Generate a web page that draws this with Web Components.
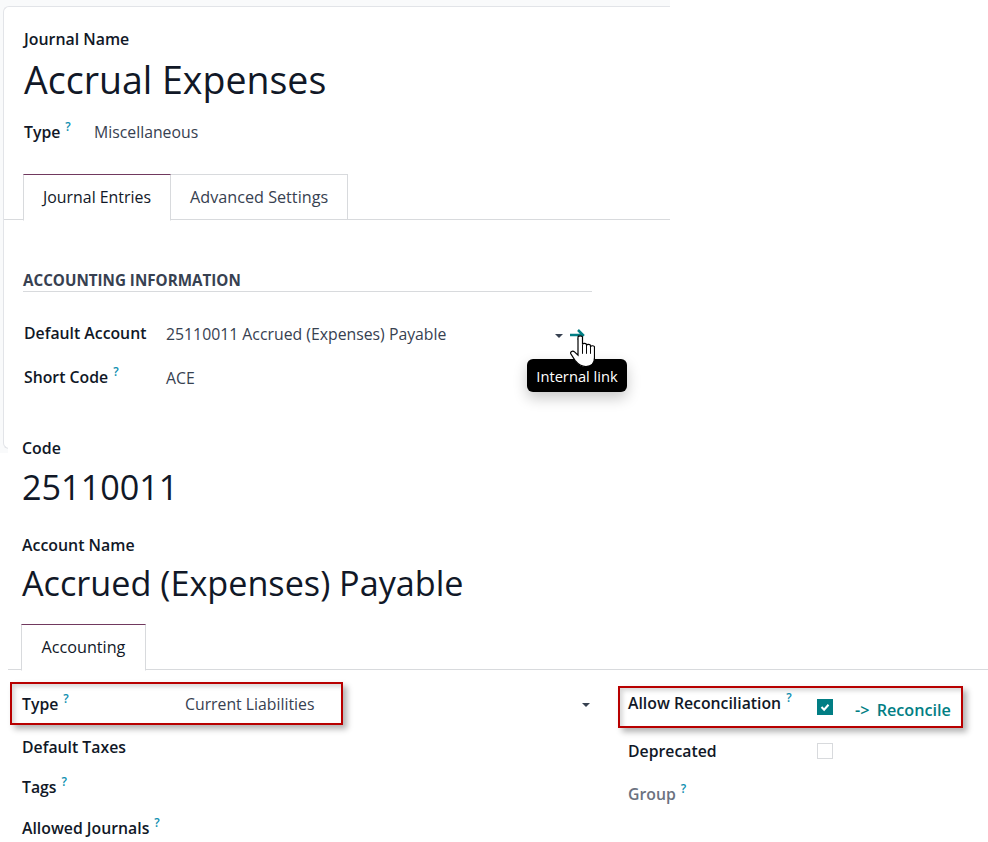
<!DOCTYPE html>
<html>
<head>
<meta charset="utf-8">
<title>Accrual Expenses</title>
<style>
    body {
        margin: 0;
        background: #fff;
        color: #111827;
        font-family: "Open Sans", "Noto Sans", sans-serif;
        font-size: 15.8px;
    }
</style>
</head>
<body>

<journal-card>
    <big-name label="Journal Name" title-text="Accrual Expenses"></big-name>
    <form-field id="journalType" label="Type" help value="Miscellaneous" width="70"></form-field>
    <tab-bar first="Journal Entries" second="Advanced Settings"></tab-bar>
    <section-title>ACCOUNTING INFORMATION</section-title>
    <account-row></account-row>
    <form-field id="shortCode" label="Short Code" help value="ACE" width="142"></form-field>
</journal-card>

<account-form></account-form>

<script>
class BigName extends HTMLElement {
    constructor() {
        super();
        this.attachShadow({ mode: 'open' });
        this.shadowRoot.innerHTML = `
            <style>
                :host { display: block; }
                .label { font-weight: 600; font-size: 15.9px; line-height: 20px; }
                .name { font-size: var(--name-size, 34.2px); line-height: 50px; margin-top: var(--name-gap, 4px); white-space: nowrap; }
            </style>
            <div class="label"></div>
            <div class="name"></div>
        `;
    }

    connectedCallback() {
        this.shadowRoot.querySelector('.label').textContent = this.getAttribute('label');
        this.shadowRoot.querySelector('.name').textContent = this.getAttribute('title-text');
    }
}

class FormField extends HTMLElement {
    constructor() {
        super();
        this.attachShadow({ mode: 'open' });
        this.shadowRoot.innerHTML = `
            <style>
                :host { display: flex; align-items: baseline; line-height: 20px; font-size: 15.8px; }
                .label { font-weight: 600; flex: none; white-space: nowrap; transform: translateY(var(--label-lift, 0)); }
                .label.muted { color: #6b7280; }
                .help { color: #0d8fb0; font-size: 12px; font-weight: 600; margin-left: 5px; position: relative; top: -7px; }
                .value { color: #374151; white-space: nowrap; }
            </style>
            <div class="label"></div>
            <div class="value"></div>
        `;
    }

    connectedCallback() {
        const label = this.shadowRoot.querySelector('.label');
        label.textContent = this.getAttribute('label');
        if (this.hasAttribute('help')) label.insertAdjacentHTML('beforeend', '<span class="help">?</span>');
        if (this.hasAttribute('muted')) label.classList.add('muted');
        if (this.hasAttribute('width')) label.style.width = this.getAttribute('width') + 'px';
        this.shadowRoot.querySelector('.value').textContent = this.getAttribute('value') || '';
    }
}

class TabBar extends HTMLElement {
    constructor() {
        super();
        this.attachShadow({ mode: 'open' });
        this.shadowRoot.innerHTML = `
            <style>
                :host { display: flex; height: 45px; border-bottom: 1px solid #d8dadd; }
                .tab { padding: 0 var(--tab-pad, 19px); line-height: 44px; height: 45px; border: 1px solid #d8dadd; border-bottom: 0; color: #374151; font-size: 16.2px; }
                .tab + .tab { margin-left: -1px; }
                .active { border-top-color: #71395f; background: #fff; color: #111827; border-bottom: 1px solid #fff; z-index: 1; font-size: var(--first-size, 16.2px); }
            </style>
            <div class="tab active"></div>
            <div class="tab second"></div>
        `;
    }

    connectedCallback() {
        this.shadowRoot.querySelector('.active').textContent = this.getAttribute('first');
        const second = this.shadowRoot.querySelector('.second');
        if (this.hasAttribute('second')) second.textContent = this.getAttribute('second');
        else second.remove();
    }
}

class SectionTitle extends HTMLElement {
    constructor() {
        super();
        this.attachShadow({ mode: 'open' });
        this.shadowRoot.innerHTML = `
            <style>
                :host { display: block; width: 569px; padding-bottom: 1px; border-bottom: 1px solid #d8dadd;
                        font-weight: 700; font-size: 15.2px; line-height: 20px; color: #374151; white-space: nowrap; }
            </style>
            <slot></slot>
        `;
    }
}

class AccountRow extends HTMLElement {
    constructor() {
        super();
        this.attachShadow({ mode: 'open' });
        this.shadowRoot.innerHTML = `
            <style>
                :host { display: flex; align-items: center; position: relative; width: 568px; height: 20px; }
                form-field { flex: 1; }
                .caret { width: 0; height: 0; border: 4px solid transparent; border-top: 4px solid #374151; border-bottom: 0; margin: 4px 7px 0 0; }
                .arrow { display: block; flex: none; margin: 2px 7px 0 0; }
                .tooltip { position: absolute; left: 503px; top: 35px; width: 100px; height: 33px; border-radius: 6px; background: #000;
                           color: #fff; font-size: 14.7px; line-height: 35px; text-align: center; box-shadow: 0 6px 14px rgba(0,0,0,.22); }
                .hand { position: absolute; left: 546px; top: 11px; display: block; }
            </style>
            <form-field label="Default Account" value="25110011 Accrued (Expenses) Payable" width="142"></form-field>
            <span class="caret"></span>
            <svg class="arrow" width="15" height="12" viewBox="0 0 15 12"><path d="M0 6h13M8 1l5 5-5 5" fill="none" stroke="#017e84" stroke-width="2.500"/></svg>
            <span class="tooltip">Internal link</span>
            <svg class="hand" width="25" height="32" viewBox="0 0 25 34" preserveAspectRatio="none">
                <path d="M8 2C8 .5 12.500 .5 12.500 2V10C13 8.500 16.500 8.500 16.500 10.500V11C17 9.500 20.500 9.500 20.500 11.500V12.500C21 11 24.500 11 24.500 13V24C24.500 29 22 33.500 16 33.500C11 33.500 8 31 5 27L.8 20C0 18 2.500 16 4.500 18L8 21.500Z" fill="#fff" stroke="#000" stroke-width="1.200"/>
                <path d="M12.500 10V20M16.500 10.500V20M20.500 11.500V20" fill="none" stroke="#000" stroke-width="1"/>
            </svg>
        `;
    }
}

class JournalCard extends HTMLElement {
    constructor() {
        super();
        this.attachShadow({ mode: 'open' });
        this.shadowRoot.innerHTML = `
            <style>
                :host { display: block; width: 670px; height: 453px; box-sizing: border-box; padding: 6px 0 4px 3px; background: #f9fafb; --first-size: 15.9px; --label-lift: 0px; }
                .card { height: 100%; box-sizing: border-box; padding-top: 22px; background: #fff; border: 1px solid #e2e4e8; border-right: 0; border-radius: 6px 0 0 6px; }
                ::slotted(big-name) { margin-left: 20px; --name-size: 37.5px; --name-gap: 6px; }
                ::slotted(#journalType) { margin: 17px 0 0 20px; }
                ::slotted(tab-bar) { margin-top: 30px; padding-left: 19px; }
                ::slotted(section-title) { margin: 50px 0 0 19px; }
                ::slotted(account-row) { margin: 32px 0 0 20px; --label-lift: -1px; }
                ::slotted(#shortCode) { margin: 24px 0 0 20px; --label-lift: -1px; }
            </style>
            <div class="card"><slot></slot></div>
        `;
    }
}

// Red marker drawn on top of the screenshot
class MarkBox extends HTMLElement {
    constructor() {
        super();
        this.attachShadow({ mode: 'open' });
        this.shadowRoot.innerHTML = `
            <style>
                :host { display: block; position: absolute; box-sizing: border-box; border: 2px solid #b80000;
                        box-shadow: 4px 4px 6px rgba(0,0,0,.3), inset 3px 3px 4px rgba(0,0,0,.15); pointer-events: none; }
            </style>
        `;
    }
}

class AccountForm extends HTMLElement {
    constructor() {
        super();
        this.attachShadow({ mode: 'open' });
        this.shadowRoot.innerHTML = `
            <style>
                :host { display: block; position: relative; height: 412px; margin: -23px 0 0 8px; padding-top: 8px; box-sizing: border-box; background: #fff; }
                big-name { margin-left: 14px; }
                .second { margin-top: 23px; --name-gap: 3px; }
                tab-bar { margin-top: 16px; padding-left: 13px; --tab-pad: 19.5px; }
                .cols { display: grid; grid-template-columns: 606px 1fr; padding: 24px 0 0 14px; }
                .left { display: flex; flex-direction: column; gap: 20px; }
                .right { display: flex; flex-direction: column; }
                .type { display: flex; align-items: center; width: 568px; margin-bottom: 1px; }
                .type form-field { flex: 1; }
                .last { margin-top: -1px; }
                .caret { width: 0; height: 0; border: 4px solid transparent; border-top: 4px solid #374151; border-bottom: 0; }
                .check-row { display: flex; align-items: center; height: 20px; margin-bottom: 27px; }
                .check-row + .check-row { margin-bottom: 23px; }
                .check-row form-field { width: 189px; }
                .box { width: 16px; height: 16px; box-sizing: border-box; border: 1px solid #d8dadd; flex: none; display: block; }
                .box.on { background: #017e84; border-color: #017e84; margin-top: 5px; }
                .reconcile { color: #017e84; font-weight: 600; margin: 12px 0 0 22px; font-size: 16.2px; word-spacing: 3px; white-space: nowrap; }
                mark-box.a { left: 2px; top: 252px; width: 333px; height: 43px; }
                mark-box.b { left: 610px; top: 256px; width: 345px; height: 42px; }
            </style>
            <big-name label="Code" title-text="25110011"></big-name>
            <big-name class="second" label="Account Name" title-text="Accrued (Expenses) Payable"></big-name>
            <tab-bar first="Accounting"></tab-bar>
            <div class="cols">
                <div class="left">
                    <div class="type">
                        <form-field label="Type" help value="Current Liabilities" width="163"></form-field>
                        <span class="caret"></span>
                    </div>
                    <form-field label="Default Taxes"></form-field>
                    <form-field label="Tags" help></form-field>
                    <form-field class="last" label="Allowed Journals" help></form-field>
                </div>
                <div class="right">
                    <div class="check-row">
                        <form-field label="Allow Reconciliation" help></form-field>
                        <svg class="box on" viewBox="0 0 16 16"><path d="M4 8l3 3 5-5.500" fill="none" stroke="#fff" stroke-width="2.400"/></svg>
                        <span class="reconcile">-&gt; Reconcile</span>
                    </div>
                    <div class="check-row">
                        <form-field label="Deprecated"></form-field>
                        <span class="box"></span>
                    </div>
                    <form-field label="Group" help muted></form-field>
                </div>
            </div>
            <mark-box class="a"></mark-box>
            <mark-box class="b"></mark-box>
        `;
    }
}

customElements.define('big-name', BigName);
customElements.define('form-field', FormField);
customElements.define('tab-bar', TabBar);
customElements.define('section-title', SectionTitle);
customElements.define('account-row', AccountRow);
customElements.define('journal-card', JournalCard);
customElements.define('mark-box', MarkBox);
customElements.define('account-form', AccountForm);
</script>
</body>
</html>
